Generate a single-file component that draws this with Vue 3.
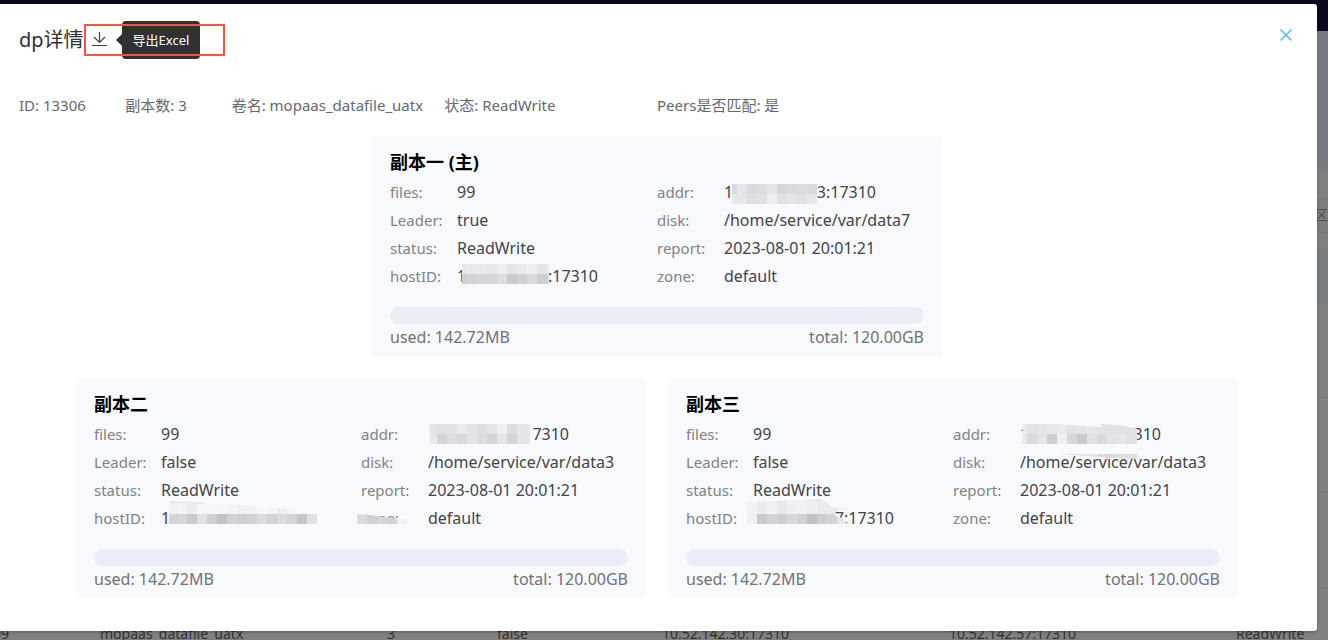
<script setup>
const info = [
  { label: 'ID', value: '13306' },
  { label: '副本数', value: '3' },
  { label: '卷名', value: 'mopaas_datafile_uatx' },
  { label: '状态', value: 'ReadWrite' },
  { label: 'Peers是否匹配', value: '是' },
]

// Mosaic patch: [x, y, width, height, colour], with an optional clip outline
const cells = (x, y, colors, h = 10) => colors.map((c, i) => [x + i * 10, y, 10, h, c])

const replicas = [
  {
    id: 'one',
    title: '副本一 (主)',
    fields: [
      { label: 'files', value: '99' },
      {
        label: 'addr', head: '1', tail: '3:17310', wide: true,
        clip: '75,5 160,5 160,25 75,25',
        mask: [
          ...cells(70, 5, ['#d9dadd', '#e4e5e9', '#d8d9dc', '#dbdde1', '#e3e4e8', '#d5d6da', '#d9dadd', '#dadbde', '#d9dade']),
          ...cells(70, 15, ['#e6e7ec', '#e6e7ec', '#dedfe3', '#dfe0e4', '#ecedf2', '#e0e1e5', '#e3e4e8', '#e1e2e6', '#e6e7ea']),
        ],
      },
      { label: 'Leader', value: 'true' },
      { label: 'disk', value: '/home/service/var/data7' },
      { label: 'status', value: 'ReadWrite' },
      { label: 'report', value: '2023-08-01 20:01:21' },
      {
        label: 'hostID', head: '1', tail: ':17310',
        clip: '72,1 159,1 159,21 72,21',
        mask: [
          ...cells(67, 1, ['#e6e7e9', '#e8e9ec', '#e8e9ec', '#e6e7ea', '#edeef1', '#e4e5e8', '#e9eaee', '#eceef2', '#e4e5e8', '#e9eaed']),
          ...cells(67, 11, ['#d0d1d3', '#d2d3d5', '#d4d5d7', '#d3d4d6', '#dcdde0', '#c9cacc', '#cfd0d2', '#d9dadd', '#cccdcf', '#d5d6d8']),
        ],
      },
      { label: 'zone', value: 'default' },
    ],
  },
  {
    id: 'two',
    title: '副本二',
    fields: [
      { label: 'files', value: '99' },
      {
        label: 'addr', head: '', tail: '17310',
        clip: '68,3 169,3 169,23 69,23',
        mask: [
          ...cells(66, 3, ['#e3e4e8', '#dfe0e4', '#e0e1e5', '#e9eaee', '#e2e3e7', '#dcdde1', '#e4e5e9', '#eff0f5', '#dcdde1', '#e5e6ea', '#e6e7ea']),
          ...cells(66, 13, ['#e7e8ec', '#d3d4d7', '#dcdde0', '#d8d9dc', '#e3e4e8', '#dbdcdf', '#d3d4d7', '#e3e4e8', '#d4d5d8', '#e5e6e9', '#e3e4e8']),
        ],
      },
      { label: 'Leader', value: 'false' },
      { label: 'disk', value: '/home/service/var/data3' },
      { label: 'status', value: 'ReadWrite' },
      { label: 'report', value: '2023-08-01 20:01:21' },
      {
        label: 'hostID', head: '1', tail: '',
        clip: '76,-4 110,-3 187,3 223,9 223,19 75,19',
        mask: [
          [70, -4, 40, 4, '#e8eaee'],
          ...cells(73, -1, ['#eff1f5', '#f2f3f7', '#ebedf1', '#f5f6fa', '#f5f6fa', '#f4f5f9', '#f2f4f8', '#eff1f5', '#eff1f5', '#f5f6fa', '#f3f4f8', '#eceef2', '#f3f4f8', '#f5f6fa', '#f6f7fb']),
          ...cells(73, 9, ['#d2d3d5', '#d5d6d8', '#c9cacc', '#dfe0e3', '#cecfd1', '#c2c3c5', '#d1d2d4', '#cecfd2', '#d1d2d5', '#dadbde', '#d2d3d6', '#d9dadd', '#d3d4d6', '#c5c6c8', '#e0e1e5']),
        ],
      },
      {
        label: 'zone', value: 'default',
        clip: '-4,9 10,10 30,13 46,15 46,19 -4,19',
        mask: cells(-4, 9, ['#d9dadd', '#d0d1d4', '#d4d5d8', '#d2d3d6', '#eeeff3']),
      },
    ],
  },
  {
    id: 'three',
    title: '副本三',
    fields: [
      { label: 'files', value: '99' },
      {
        label: 'addr', head: '1', tail: '17310',
        clip: '70,3 106,3 128,5 148,6 148,3 166,4 184,8 184,23 69,23',
        mask: [
          ...cells(64, 3, ['#e8e9ed', '#e1e2e6', '#e3e4e8', '#e6e7eb', '#e8e9ed', '#e1e2e6', '#e3e4e8', '#e6e7eb', '#e2e3e7', '#e1e2e5', '#e0e1e5', '#e0e1e5']),
          [60, 10, 9, 13, '#f8f9fd'],
          ...cells(64, 13, ['#e8e9ed', '#d9dadd', '#e3e4e8', '#cdced1', '#eeeff4', '#d6d7da', '#c9cacd', '#e1e2e6', '#d9dadd', '#e2e3e7', '#e4e5e8', '#e0e1e4']),
        ],
      },
      { label: 'Leader', value: 'false' },
      {
        label: 'disk', value: '/home/service/var/data3',
        clip: '105,5 184,5 184,10 158,9 130,7',
        mask: [[105, 5, 40, 5, '#e3e4e8'], [145, 5, 20, 5, '#d9dadd'], [165, 5, 20, 5, '#dedfe2']],
      },
      { label: 'status', value: 'ReadWrite' },
      { label: 'report', value: '2023-08-01 20:01:21' },
      {
        label: 'hostID', head: '', tail: '7:17310',
        clip: '61,-3 110,-5 134,-6 148,3 160,4 150,7 148,10 156,13 162,19 61,19',
        mask: [
          ...cells(61, -6, ['#f1f2f6', '#e9ebef', '#eff1f5', '#e7e9ed', '#eff0f4', '#f0f1f5', '#eceef1', '#e9eaee', '#e9eaee', '#f0f1f5', '#f0f1f5'], 15),
          ...cells(61, 9, ['#eff0f4', '#c9cacc', '#d2d3d5', '#cecfd1', '#d6d7d9', '#d0d1d3', '#c0c1c3', '#cdced0', '#d1d2d4', '#e4e5e9', '#eeeff3']),
        ],
      },
      { label: 'zone', value: 'default' },
    ],
  },
]

const rows = [
  ['', '', '', '', '', '', ''],
  ['', '', '', '', '', '', ''],
  ['', '', '', '', '', '', ''],
  ['109', 'mopaas_datafile_uatx', '3', 'false', '10.52.142.30:17310', '10.52.142.57:17310', 'ReadWrite'],
]
</script>

<template>
  <div class="page">
    <div class="backdrop" aria-hidden="true">
      <div class="topbar"></div>
      <div class="banner"></div>
      <div class="toolbar"></div>
      <div class="filter">区</div>
      <div class="spacer"></div>
      <div class="thead"></div>
      <table class="list">
        <colgroup>
          <col class="c1" /><col class="c2" /><col class="c3" /><col class="c4" /><col class="c5" /><col class="c6" /><col class="c7" />
        </colgroup>
        <tbody>
          <tr v-for="(row, r) in rows" :key="r">
            <td v-for="(cell, c) in row" :key="c"><span>{{ cell }}</span></td>
          </tr>
        </tbody>
      </table>
    </div>

    <section class="dialog" role="dialog" aria-labelledby="dialog-title">
      <header class="head">
        <h1 id="dialog-title">dp详情</h1>
        <div class="export">
          <button class="icon-btn" type="button" aria-label="导出Excel">
            <svg width="16" height="16" viewBox="0 0 16 16" fill="none" stroke="#3c3e42" stroke-width="1.2">
              <path d="M7.5 0V10.5M2 5L7.5 10.5L13 5M0 13.5H15" />
            </svg>
          </button>
          <div class="tooltip" role="tooltip">导出Excel</div>
          <div class="marker"></div>
        </div>
        <button class="icon-btn close" type="button" aria-label="关闭">
          <svg width="12" height="12" viewBox="0 0 12 12" fill="none" stroke="#35b5ee" stroke-width="1.2">
            <path d="M0.5 0.5L11.5 11.5M11.5 0.5L0.5 11.5" />
          </svg>
        </button>
      </header>

      <div class="info">
        <span v-for="item in info" :key="item.label">{{ item.label }}: {{ item.value }}</span>
      </div>

      <div class="cards">
        <article v-for="rep in replicas" :key="rep.id" class="card">
          <h2>{{ rep.title }}</h2>
          <dl class="fields">
            <div v-for="f in rep.fields" :key="f.label" class="field">
              <dt>{{ f.label }}:</dt>
              <dd v-if="f.value">{{ f.value }}</dd>
              <dd v-else class="split" :class="{ wide: f.wide }">
                <span>{{ f.head }}</span><span>{{ f.tail }}</span>
              </dd>
              <svg v-if="f.mask" class="mosaic" width="267" height="28" shape-rendering="crispEdges">
                <clipPath :id="`clip-${rep.id}-${f.label}`"><polygon :points="f.clip" /></clipPath>
                <g :clip-path="`url(#clip-${rep.id}-${f.label})`">
                  <rect v-for="(m, i) in f.mask" :key="i" :x="m[0]" :y="m[1]" :width="m[2]" :height="m[3]" :fill="m[4]" />
                </g>
              </svg>
            </div>
          </dl>
          <div class="bar" role="progressbar" aria-label="used" aria-valuenow="0" aria-valuemin="0" aria-valuemax="100"></div>
          <div class="usage"><span>used: 142.72MB</span><span>total: 120.00GB</span></div>
        </article>
      </div>
    </section>
  </div>
</template>

<style>
body {
  background: #808080;
}
</style>

<style scoped>
.page {
  position: relative;
  min-height: 100vh;
  box-sizing: border-box;
  padding: 4px 11px 9px 0;
  overflow: hidden;
  font-family: "Noto Sans", "Noto Sans CJK SC", sans-serif;
  font-size: 16px;
  color: #66686c;
}
.backdrop {
  position: absolute;
  inset: 0;
  overflow: hidden;
  background: #808080;
  color: #303133;
}
.topbar { height: 31px; background: #0d0820; }
.banner { height: 140px; background: #777a7f; }
.toolbar { height: 27px; background: #808080; }
.filter {
  height: 33px;
  border: solid #717377;
  border-width: 1px 0;
  background: #7b7d80;
  font-size: 14px;
  line-height: 32px;
  text-align: right;
  color: #505255;
}
.spacer { height: 15px; background: #808080; }
.thead { height: 54px; background: #797c7f; border-bottom: 1px solid #757678; }
.list {
  width: 100%;
  table-layout: fixed;
  border-collapse: collapse;
  font-size: 14px;
}
.list td {
  height: 91px;
  padding: 0 0 3px;
  border-bottom: 1px solid #757678;
  white-space: nowrap;
}
.list td:first-child { direction: rtl; overflow: hidden; }
.list td:first-child span { padding-right: 91px; }
.c1 { width: 100px; }
.c2 { width: 287px; }
.c3 { width: 110px; }
.c4 { width: 165px; }
.c5 { width: 287px; }
.c6 { width: 287px; }
.dialog {
  position: relative;
  box-sizing: border-box;
  padding: 16px 22px 33px 19px;
  border-radius: 0 3px 3px 0;
  background: #fff;
  box-shadow: 0 1px 3px rgba(0, 0, 0, 0.3);
}
.head {
  display: flex;
  align-items: center;
  height: 40px;
}
h1 {
  margin: 0;
  font-size: 20px;
  font-weight: 400;
  line-height: 40px;
  color: #303133;
}
.export {
  position: relative;
  display: flex;
  align-items: center;
  margin-left: 8px;
}
.icon-btn {
  display: flex;
  padding: 0;
  border: 0;
  background: none;
  cursor: pointer;
}
.close { margin: 0 3px 10px auto; }
.tooltip {
  position: absolute;
  left: 30px;
  top: -11px;
  padding: 0 11px;
  border-radius: 4px;
  background: #303133;
  color: #fff;
  font-size: 13px;
  line-height: 38px;
  white-space: nowrap;
}
.tooltip::before {
  content: "";
  position: absolute;
  left: -6px;
  top: 13px;
  border: solid transparent;
  border-width: 6px 6px 6px 0;
  border-right-color: #303133;
}
.marker {
  position: absolute;
  left: -8px;
  top: -8px;
  width: 137px;
  height: 28px;
  border: 2px solid #f5553f;
}
.info {
  display: grid;
  grid-template-columns: 1fr 1fr 2fr 2fr 6fr;
  margin: 33px 0 19px;
  line-height: 24px;
  font-size: 15px;
  white-space: nowrap;
}
.info span { min-width: 0; }
.cards {
  display: flex;
  flex-wrap: wrap;
  justify-content: center;
  gap: 22px;
}
.card {
  box-sizing: border-box;
  width: 570px;
  max-width: 100%;
  padding: 11px 18px 6px;
  border-radius: 4px;
  background: #f8f9fd;
}
.card:first-child { margin: 0 calc(50% - 285px); }
h2 {
  margin: 0;
  font-size: 18px;
  font-weight: 700;
  line-height: 31px;
  color: #000;
}
.fields {
  display: grid;
  grid-template-columns: 1fr 1fr;
  margin: 0 0 17px;
  line-height: 28px;
}
.field {
  position: relative;
  display: flex;
  white-space: nowrap;
}
dt { width: 67px; font-size: 15px; color: #808285; }
dd { margin: 0; font-size: 16px; color: #434447; }
.split { display: flex; justify-content: space-between; width: 141px; }
.wide { width: 152px; }
.mosaic {
  position: absolute;
  left: 0;
  top: 1px;
  overflow: visible;
}
.bar {
  height: 17px;
  border-radius: 9px;
  background: #eaedf5;
}
.usage {
  display: flex;
  justify-content: space-between;
  line-height: 26px;
  color: #707276;
}
</style>
